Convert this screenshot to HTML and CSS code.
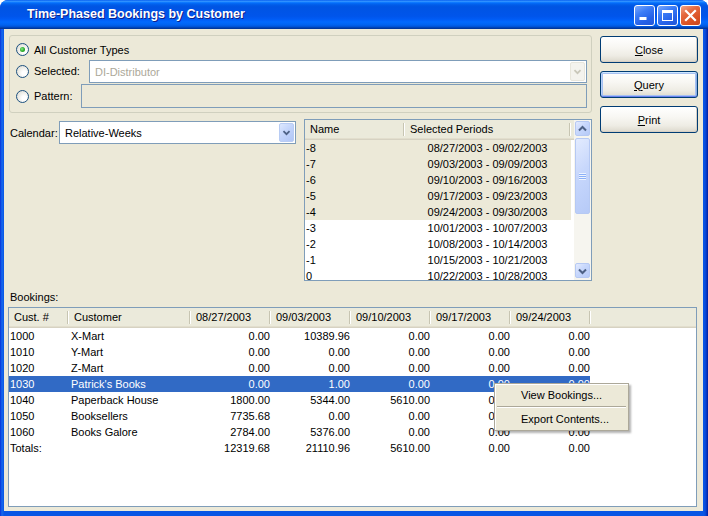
FILE: index.html
```html
<!DOCTYPE html>
<html>
<head>
<meta charset="utf-8">
<link rel="stylesheet" href="styles.css">
</head>
<body>
<div class="window">
  <div class="titlebar">
    <span class="title">Time-Phased Bookings by Customer</span>
    <div class="tbtns">
      <span class="tb tb-blue"><svg width="19" height="19" viewBox="0 0 19 19"><rect x="4.5" y="11" width="7" height="3" fill="#fff"/></svg></span>
      <span class="tb tb-blue"><svg width="19" height="19" viewBox="0 0 19 19"><rect x="4" y="4" width="11" height="3" fill="#fff"/><rect x="4.5" y="4.5" width="10" height="10" fill="none" stroke="#fff" stroke-width="1"/></svg></span>
      <span class="tb tb-red"><svg width="19" height="19" viewBox="0 0 19 19"><path d="M5 5 L14 14 M14 5 L5 14" stroke="#fff" stroke-width="2.2" stroke-linecap="square"/></svg></span>
    </div>
  </div>
  <div class="client">
    <div class="top">
      <div class="leftcol">
        <div class="group">
          <div class="grow r1"><span class="radio checked"></span><span>All Customer Types</span></div>
          <div class="grow r2"><span class="radio"></span><span class="lbl lbl-sel">Selected:</span>
            <div class="combo disabled"><span class="ctext">DI-Distributor</span><span class="ddbtn"><svg width="15" height="19" viewBox="0 0 15 19"><polyline points="4,8 7.5,11.5 11,8" fill="none" stroke="#C9C7BA" stroke-width="2"/></svg></span></div>
          </div>
          <div class="grow r3"><span class="radio"></span><span class="lbl lbl-pat">Pattern:</span>
            <div class="field disabled"></div>
          </div>
        </div>
        <div class="lower">
          <div class="cal">
            <span class="cal-label">Calendar:</span>
            <div class="combo"><span class="ctext">Relative-Weeks</span><span class="ddbtn active"><svg width="15" height="19" viewBox="0 0 15 19"><polyline points="4,8 7.5,11.5 11,8" fill="none" stroke="#4D6185" stroke-width="2"/></svg></span></div>
          </div>
          <div class="list">
            <div class="lcontent">
              <div class="lhead"><span class="lh lh-name">Name</span><span class="lh lh-per">Selected Periods</span></div>
              <div class="lrow sel"><span class="ln">-8</span><span class="lp">08/27/2003 - 09/02/2003</span></div>
              <div class="lrow sel"><span class="ln">-7</span><span class="lp">09/03/2003 - 09/09/2003</span></div>
              <div class="lrow sel"><span class="ln">-6</span><span class="lp">09/10/2003 - 09/16/2003</span></div>
              <div class="lrow sel"><span class="ln">-5</span><span class="lp">09/17/2003 - 09/23/2003</span></div>
              <div class="lrow sel"><span class="ln">-4</span><span class="lp">09/24/2003 - 09/30/2003</span></div>
              <div class="lrow"><span class="ln">-3</span><span class="lp">10/01/2003 - 10/07/2003</span></div>
              <div class="lrow"><span class="ln">-2</span><span class="lp">10/08/2003 - 10/14/2003</span></div>
              <div class="lrow"><span class="ln">-1</span><span class="lp">10/15/2003 - 10/21/2003</span></div>
              <div class="lrow"><span class="ln">0</span><span class="lp">10/22/2003 - 10/28/2003</span></div>
            </div>
            <div class="sb">
              <span class="sbbtn"><svg width="13" height="14" viewBox="0 0 13 14"><polyline points="3,8.5 6.5,5 10,8.5" fill="none" stroke="#4D6185" stroke-width="2"/></svg></span>
              <span class="thumb"><span class="grip"></span></span>
              <span class="track"></span>
              <span class="sbbtn"><svg width="13" height="14" viewBox="0 0 13 14"><polyline points="3,5.5 6.5,9 10,5.5" fill="none" stroke="#4D6185" stroke-width="2"/></svg></span>
            </div>
          </div>
        </div>
      </div>
      <div class="buttons">
        <div class="btn"><span><u>C</u>lose</span></div>
        <div class="btn default"><span><u>Q</u>uery</span></div>
        <div class="btn"><span><u>P</u>rint</span></div>
      </div>
    </div>
    <div class="bk-label">Bookings:</div>
    <div class="table">
      <div class="thead">
        <span class="th first">Cust. #</span>
        <span class="th">Customer</span>
        <span class="th">08/27/2003</span>
        <span class="th">09/03/2003</span>
        <span class="th">09/10/2003</span>
        <span class="th">09/17/2003</span>
        <span class="th">09/24/2003</span>
        <span class="th filler"></span>
      </div>
      <div class="trow"><span>1000</span><span class="cn">X-Mart</span><span class="num">0.00</span><span class="num">10389.96</span><span class="num">0.00</span><span class="num">0.00</span><span class="num">0.00</span></div>
      <div class="trow"><span>1010</span><span class="cn">Y-Mart</span><span class="num">0.00</span><span class="num">0.00</span><span class="num">0.00</span><span class="num">0.00</span><span class="num">0.00</span></div>
      <div class="trow"><span>1020</span><span class="cn">Z-Mart</span><span class="num">0.00</span><span class="num">0.00</span><span class="num">0.00</span><span class="num">0.00</span><span class="num">0.00</span></div>
      <div class="trow sel"><span>1030</span><span class="cn">Patrick's Books</span><span class="num">0.00</span><span class="num">1.00</span><span class="num">0.00</span><span class="num">0.00</span><span class="num">0.00</span></div>
      <div class="trow"><span>1040</span><span class="cn">Paperback House</span><span class="num">1800.00</span><span class="num">5344.00</span><span class="num">5610.00</span><span class="num">0.00</span><span class="num">0.00</span></div>
      <div class="trow"><span>1050</span><span class="cn">Booksellers</span><span class="num">7735.68</span><span class="num">0.00</span><span class="num">0.00</span><span class="num">0.00</span><span class="num">0.00</span></div>
      <div class="trow"><span>1060</span><span class="cn">Books Galore</span><span class="num">2784.00</span><span class="num">5376.00</span><span class="num">0.00</span><span class="num">0.00</span><span class="num">0.00</span></div>
      <div class="trow"><span>Totals:</span><span class="cn"></span><span class="num">12319.68</span><span class="num">21110.96</span><span class="num">5610.00</span><span class="num">0.00</span><span class="num">0.00</span></div>
    </div>
    <div class="menu">
      <div class="mitem">View Bookings...</div>
      <div class="msep"></div>
      <div class="mitem">Export Contents...</div>
    </div>
  </div>
</div>
</body>
</html>
```
FILE: styles.css
```css
* { box-sizing: border-box; }
html, body { margin: 0; padding: 0; }
body {
  width: 708px; height: 516px; overflow: hidden;
  font-family: "Liberation Sans", Arial, sans-serif;
  font-size: 11px; color: #000; background: #fff;
}
.window {
  width: 708px; height: 516px;
  display: flex; flex-direction: column;
  background: linear-gradient(to right, #0831D9 0, #166AEE 2px, #0855E5 4px, #0855E5 calc(100% - 4px), #0841D0 calc(100% - 2px), #001EA0 100%);
  border-radius: 8px 8px 0 0;
}
.titlebar {
  height: 29px; flex: none;
  display: flex; align-items: center;
  padding: 0 7px 0 27px;
  border-radius: 8px 8px 0 0;
  background: linear-gradient(to bottom, #0058ee 0%, #3593ff 4%, #288eff 6%, #127dff 8%, #036ffc 10%, #0262ee 14%, #0057e5 20%, #0054e3 24%, #0055eb 56%, #005bf5 66%, #026afe 76%, #0062ef 86%, #0052d6 92%, #0040ab 96%, #003092 100%);
}
.title {
  flex: 1; color: #fff; font-weight: bold; font-size: 12.5px;
  text-shadow: 1px 1px 0 #0F1E8A; margin-top: -1px;
}
.tbtns { display: flex; gap: 2px; margin-top: 1px; }
.tb {
  width: 21px; height: 21px; border: 1px solid #fff; border-radius: 3px;
  display: block; overflow: hidden;
}
.tb svg { display: block; }
.tb-blue { background: linear-gradient(150deg, #7AA8FC 0%, #3C7CF6 35%, #2561E8 70%, #2258D8 100%); }
.tb-red { background: linear-gradient(150deg, #F1A488 0%, #E4683E 35%, #DA5224 70%, #C9461F 100%); }

.client {
  flex: 1; margin: 0 5px 5px 4px;
  background: #ECE9D8; position: relative;
  display: flex; flex-direction: column;
}
.top { display: flex; gap: 8px; padding: 6px 5px 0 5px; }
.leftcol { width: 583px; display: flex; flex-direction: column; }
.group {
  height: 78px; border: 1px solid #D0D0BF; border-radius: 3px;
  padding: 5px 4px 4px 6px;
  display: flex; flex-direction: column;
}
.grow { display: flex; align-items: center; }
.r1 { height: 17px; }
.r2 { height: 25px; align-items: flex-end; }
.r3 { height: 25px; align-items: flex-end; }
.r2 .radio, .r2 .lbl { align-self: center; margin-top: 1px; }
.r3 .radio, .r3 .lbl { align-self: center; margin-top: 1px; }
.radio {
  width: 13px; height: 13px; border-radius: 50%;
  border: 1px solid #1C5180;
  background: radial-gradient(circle at 65% 65%, #FFFFFF 20%, #E6E5DE 70%, #D4D2C8 100%);
  margin-right: 5px; flex: none; position: relative;
}
.radio.checked::after {
  content: ""; position: absolute; left: 3px; top: 3px;
  width: 5px; height: 5px; border-radius: 50%;
  background: radial-gradient(circle at 40% 40%, #8BEA8B 0%, #2FB02F 50%, #188818 100%);
}
.lbl-sel { width: 55px; }
.lbl-pat { width: 47px; }
.combo {
  flex: 1; height: 23px; border: 1px solid #7F9DB9; background: #fff;
  display: flex; align-items: center; padding: 0 1px 0 5px;
}
.combo .ctext { flex: 1; }
.combo.disabled .ctext { color: #ACA899; }
.ddbtn {
  width: 15px; height: 19px; border-radius: 2px; flex: none;
  background: #F4F3EE; border: 1px solid #E8E6DC;
  display: flex; align-items: center; justify-content: center;
}
.ddbtn svg { display: block; }
.ddbtn.active {
  background: linear-gradient(135deg, #DDE8FE 0%, #C1D3FB 50%, #B1C6F6 100%);
  border: 1px solid #B8CCF4;
}
.field {
  flex: 1; height: 24px; border: 1px solid #7F9DB9; background: #ECE9D8;
}

.lower { display: flex; margin-top: 6px; height: 162px; }
.cal { display: flex; align-items: center; width: 287px; height: 23px; margin-top: 2px; }
.cal-label { width: 50px; padding-left: 1px; }
.cal .combo { flex: none; width: 237px; }
.list {
  margin-left: 8px; width: 288px; height: 162px;
  border: 1px solid #7F9DB9; background: #fff; display: flex;
}
.lcontent { flex: 1; overflow: hidden; }
.lhead {
  height: 20px; display: flex; background: #EBEADB;
  box-shadow: inset 0 -1px #D6D2C2, inset 0 -2px #E2DECD;
}
.lh { position: relative; line-height: 19px; padding-left: 5px; }
.lh::after {
  content: ""; position: absolute; right: 0; top: 3px; bottom: 4px;
  width: 1px; background: #C7C5B2; box-shadow: 1px 0 #fff;
}
.lh-name { width: 99px; padding-left: 5px; }
.lh-per { width: 166px; padding-left: 6px; }
.lrow { display: flex; height: 16px; line-height: 16px; width: 266px; }
.lrow.sel { background: #ECE9D8; }
.ln { width: 99px; padding-left: 1px; }
.lp { width: 167px; text-align: center; }
.sb {
  width: 17px; flex: none; background: #F6F5EF;
  display: flex; flex-direction: column; padding: 1px 1px 2px 1px;
}
.sbbtn, .thumb {
  display: flex; align-items: center; justify-content: center;
  border: 1px solid #B6C9F3; border-radius: 2px;
  background: linear-gradient(135deg, #E3EBFE 0%, #C7D7FC 45%, #B6CAF7 100%);
}
.sbbtn { height: 15px; }
.thumb { height: 76px; margin-top: 2px; }
.grip {
  width: 7px; height: 7px;
  background: repeating-linear-gradient(to bottom, #EEF4FE 0 1px, #8CB0F8 1px 2px);
}
.track { flex: 1; }

.buttons { width: 98px; display: flex; flex-direction: column; gap: 8px; margin-top: 1px; }
.btn {
  height: 27px; border: 1px solid #003C74; border-radius: 3px;
  background: linear-gradient(to bottom, #FFFFFF 0%, #F8F7F3 40%, #EEECE4 75%, #DCD8CC 100%);
  box-shadow: inset -1px -1px #D6D0C5;
  display: flex; align-items: center; justify-content: center;
}
.btn.default {
  box-shadow: inset 0 1px #CEE7FF, inset 0 -1px #6982EE, inset 1px 0 #B8D1F8, inset -1px 0 #89ADE4, inset 0 0 0 2px #A6C1F2;
}

.bk-label { margin: 9px 0 0 6px; height: 14px; line-height: 14px; }
.table {
  margin: 3px 0 0 4px; width: 689px; height: 200px;
  border: 1px solid #7F9DB9; background: #fff; overflow: hidden;
}
.thead, .trow {
  display: grid; grid-template-columns: 59px 122px 80px 80px 80px 80px 80px 1fr;
}
.thead {
  height: 20px; background: #EBEADB;
  box-shadow: inset 0 -1px #D6D2C2, inset 0 -2px #E2DECD;
}
.th { position: relative; line-height: 19px; padding-left: 6px; }
.th.first { padding-left: 5px; }
.th::after {
  content: ""; position: absolute; right: 0; top: 3px; bottom: 4px;
  width: 1px; background: #C7C5B2; box-shadow: 1px 0 #fff;
}
.th.filler::after { display: none; }
.trow { height: 16px; line-height: 16px; width: 581px; grid-template-columns: 59px 122px 80px 80px 80px 80px 80px; }
.trow span:first-child { padding-left: 1px; }
.trow .cn { padding-left: 3px; }
.trow .num { text-align: right; padding-right: 0; }
.trow.sel { background: #316AC5; color: #fff; }

.menu {
  position: absolute; left: 490px; top: 354px;
  width: 135px; height: 48px;
  background: #ECE9D8; border: 1px solid #ACA899;
  box-shadow: inset 1px 1px #fff, 2px 2px 2px rgba(0,0,0,0.3);
  padding: 1px;
}
.mitem { height: 20px; line-height: 20px; padding-left: 25px; }
.msep { height: 4px; margin: 0 1px; background: linear-gradient(to bottom, transparent 1px, #ACA899 1px 2px, #fff 2px 3px, transparent 3px); }
```
